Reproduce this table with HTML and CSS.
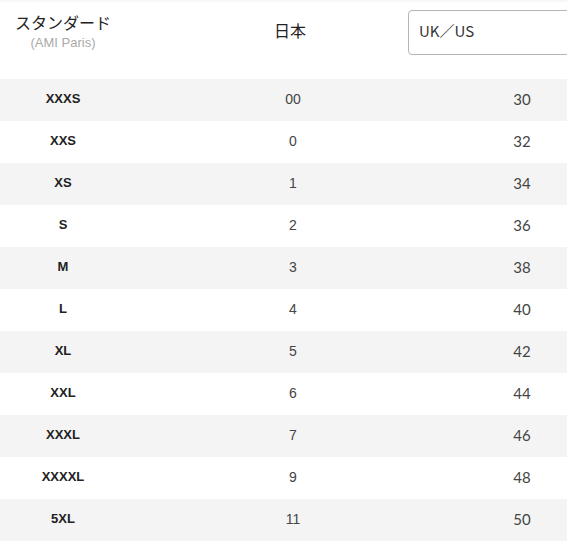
FILE: index.html
```html
<!DOCTYPE html>
<html lang="ja">
<head>
<meta charset="utf-8">
<link rel="stylesheet" href="styles.css">
</head>
<body>
<div class="chart">
  <div class="head">
    <div class="hcell std">
      <div class="std-title">スタンダード</div>
      <div class="std-sub">(AMI Paris)</div>
    </div>
    <div class="hcell jp">日本</div>
    <div class="hcell sel">
      <div class="select">UK／US</div>
    </div>
  </div>
  <div class="rows">
    <div class="row"><span class="c1">XXXS</span><span class="c2">00</span><span class="c3">30</span></div>
    <div class="row"><span class="c1">XXS</span><span class="c2">0</span><span class="c3">32</span></div>
    <div class="row"><span class="c1">XS</span><span class="c2">1</span><span class="c3">34</span></div>
    <div class="row"><span class="c1">S</span><span class="c2">2</span><span class="c3">36</span></div>
    <div class="row"><span class="c1">M</span><span class="c2">3</span><span class="c3">38</span></div>
    <div class="row"><span class="c1">L</span><span class="c2">4</span><span class="c3">40</span></div>
    <div class="row"><span class="c1">XL</span><span class="c2">5</span><span class="c3">42</span></div>
    <div class="row"><span class="c1">XXL</span><span class="c2">6</span><span class="c3">44</span></div>
    <div class="row"><span class="c1">XXXL</span><span class="c2">7</span><span class="c3">46</span></div>
    <div class="row"><span class="c1">XXXXL</span><span class="c2">9</span><span class="c3">48</span></div>
    <div class="row"><span class="c1">5XL</span><span class="c2">11</span><span class="c3">50</span></div>
  </div>
</div>
</body>
</html>
```
FILE: styles.css
```css
html, body {
  margin: 0;
  padding: 0;
  background: #fff;
  overflow: hidden;
}
body {
  width: 567px;
  height: 548px;
  font-family: "Liberation Sans", Arial, sans-serif;
  color: #333;
}
.chart {
  width: 567px;
  overflow: hidden;
  border-top: 2px solid #f8f8f8;
}
.head {
  display: grid;
  grid-template-columns: 126px 282px 1fr;
  height: 77px;
  overflow: hidden;
}
.hcell {
  display: flex;
  flex-direction: column;
  align-items: center;
}
.std {
  padding-top: 9px;
}
.std-title {
  font-family: "Noto Sans CJK JP", sans-serif;
  font-size: 16px;
  line-height: 22px;
  color: #222;
}
.std-sub {
  font-size: 13px;
  line-height: 16px;
  color: #aaa;
  margin-top: 2px;
}
.jp {
  padding-left: 46px;
  padding-top: 16px;
  font-family: "Noto Sans CJK JP", sans-serif;
  font-size: 16px;
  line-height: 24px;
  color: #222;
}
.sel {
  align-items: flex-start;
  padding-top: 8px;
  min-width: 0;
}
.select {
  box-sizing: border-box;
  width: 240px;
  flex-shrink: 0;
  height: 45px;
  border: 1px solid #b5b5b5;
  border-radius: 4px;
  padding-left: 10px;
  padding-bottom: 4px;
  display: flex;
  align-items: center;
  font-family: "Noto Sans CJK JP", sans-serif;
  font-size: 15px;
  color: #333;
}
.row {
  display: grid;
  grid-template-columns: 126px 334px 124px;
  height: 42px;
  box-sizing: border-box;
  padding-bottom: 3px;
  align-items: center;
  text-align: center;
  font-size: 14px;
}
.row:nth-child(odd) {
  background: #f4f4f4;
}
.c1 {
  font-weight: bold;
  font-size: 13px;
  color: #222;
}
.c2 {
  color: #444;
}
.c3 {
  font-family: "Lato", sans-serif;
  font-size: 15px;
  color: #444;
}
```
